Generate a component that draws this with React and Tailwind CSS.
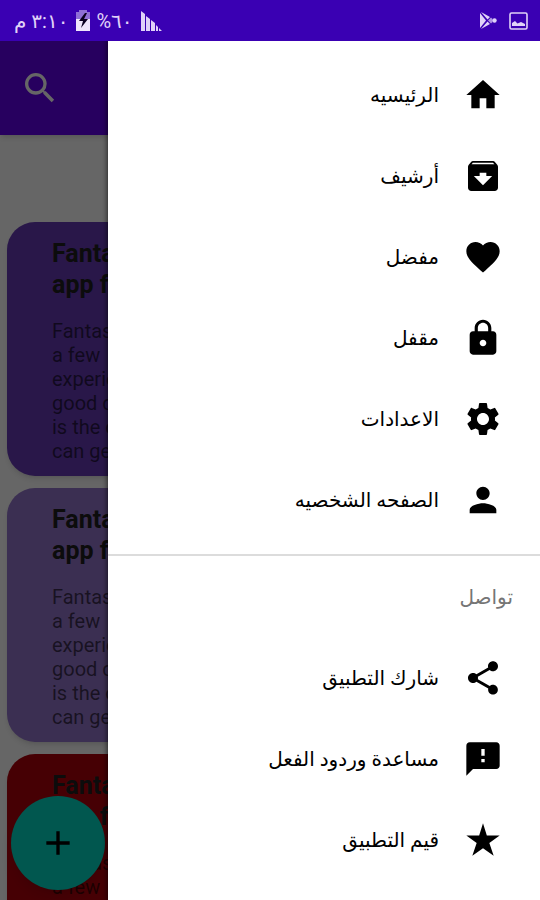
import {
  MdAdd,
  MdArchive,
  MdFavorite,
  MdFeedback,
  MdHome,
  MdLock,
  MdPerson,
  MdSearch,
  MdSettings,
  MdShare,
} from "react-icons/md";

function StarIcon({ className }) {
  return (
    <svg viewBox="0 0 24 24" fill="currentColor" className={className}>
      <path d="M12 2l2.300 7.300H22l-6.200 4.500 2.600 7.700L12 16.900l-6.400 4.600 2.600-7.700L2 9.300h7.700z" />
    </svg>
  );
}

const mainLinks = [
  { label: "الرئيسيه", icon: MdHome },
  { label: "أرشيف", icon: MdArchive },
  { label: "مفضل", icon: MdFavorite },
  { label: "مقفل", icon: MdLock },
  { label: "الاعدادات", icon: MdSettings },
  { label: "الصفحه الشخصيه", icon: MdPerson },
];

const contactLinks = [
  { label: "شارك التطبيق", icon: MdShare },
  { label: "مساعدة وردود الفعل", icon: MdFeedback },
  { label: "قيم التطبيق", icon: StarIcon },
];

const notes = [
  { id: 1, color: "bg-[#673ab7]" },
  { id: 2, color: "bg-[#9575cd]" },
  { id: 3, color: "bg-[#b0000c]" },
];

const noteTitle = ["Fantastic", "app for"];
const noteLines = ["Fantastic", "a few", "experience", "good design", "is the one", "can get"];

function StatusBar() {
  return (
    <header className="flex h-[41px] shrink-0 items-center justify-between bg-[#3a00b3] pl-[14px] pr-3 text-[20px] leading-6 text-[#e0d2f8]">
      <div className="flex items-center">
        <span dir="rtl">٣:١٠ م</span>
        <svg viewBox="0 0 14 21" className="ml-2 h-[21px] w-[14px]">
          <path d="M0 2h3V0h8v2h3v19H0z" fill="#8f6fd6" />
          <path d="M0 9h14v12H0z" fill="#efe6fb" />
          <path d="M9 3L3 11h4l-2 7 7-9H8l3-6z" fill="#0b0020" />
        </svg>
        <span className="ml-[6px]">%٦٠</span>
        <svg viewBox="0 0 22 20" className="ml-2 h-5 w-[22px]" fill="currentColor">
          <path d="M0 0l4 3v17H0zM5 5l4 3v12H5zM10 9l4 3v8h-4zM15 14l2 2v4h-2zM18 17l3 3h-3z" />
        </svg>
      </div>
      <div className="flex items-center gap-3">
        <svg viewBox="0 0 17 17" className="h-[17px] w-[17px]" fill="currentColor">
          <path d="M0 1v15l6-7.500z" />
          <path d="M1 0l6.500 7.500L10 5zM1 17l6.500-7.500L10 12z" />
          <path d="M11 5.500l-3 3 3 3 1.500-1.500V7z" fillOpacity="0.7" />
          <circle cx="14.500" cy="8.500" r="2.200" />
        </svg>
        <svg viewBox="0 0 19 18" className="h-[18px] w-[19px]">
          <rect x="1" y="1" width="17" height="16" rx="1.500" fill="none" stroke="currentColor" strokeWidth="1.600" />
          <path d="M3 14v-3l3-2 2.500 2.500L12 10l4 2v2z" fill="currentColor" />
        </svg>
      </div>
    </header>
  );
}

function NoteCard({ color }) {
  return (
    <article className={`${color} rounded-[28px] pt-4 pr-4 pb-[13px] pl-[45px] text-black shadow-md`}>
      <h2 className="text-[25px] leading-[31px] font-bold text-[#202020]">
        {noteTitle.map((line) => (
          <span key={line} className="block whitespace-nowrap">
            {line}
          </span>
        ))}
      </h2>
      <p className="mt-[19px] text-[20px] leading-6 text-black/60">
        {noteLines.map((line) => (
          <span key={line} className="block whitespace-nowrap">
            {line}
          </span>
        ))}
      </p>
    </article>
  );
}

function DrawerLink({ label, icon: Icon }) {
  return (
    <li>
      <a href="#" className="flex h-[81px] items-center gap-6 pr-[37px] text-[20px] leading-8 text-black">
        <Icon className="size-10 shrink-0" />
        <span>{label}</span>
      </a>
    </li>
  );
}

function Drawer() {
  return (
    <nav
      dir="rtl"
      className="absolute inset-y-0 right-0 w-4/5 overflow-hidden bg-white pt-[13px] shadow-[0_0_5px_1px_rgba(0,0,0,0.6)]"
    >
      <ul>
        {mainLinks.map((link) => (
          <DrawerLink key={link.label} {...link} />
        ))}
      </ul>
      <div className="mt-[14px] border-t-2 border-[#dcdcdc]">
        <h2 className="flex h-[81px] items-center pr-[27px] text-[20px] leading-8 text-[#757575]">تواصل</h2>
        <ul>
          {contactLinks.map((link) => (
            <DrawerLink key={link.label} {...link} />
          ))}
        </ul>
      </div>
    </nav>
  );
}

export default function App() {
  return (
    <div className="flex h-screen flex-col overflow-hidden bg-white font-['Roboto','DejaVu_Sans',sans-serif]">
      <StatusBar />
      <div className="relative min-h-0 flex-1 overflow-hidden">
        <div className="flex h-[94px] items-center bg-[#6200ee] pl-5 shadow-md">
          <button type="button" aria-label="Search" className="text-white">
            <MdSearch className="size-10" />
          </button>
        </div>
        <main className="mt-[87px] flex w-1/2 flex-col gap-3 pl-[7px]">
          {notes.map((note) => (
            <NoteCard key={note.id} color={note.color} />
          ))}
        </main>
        <button
          type="button"
          aria-label="Add note"
          className="absolute bottom-[10px] left-[11px] flex size-[94px] items-center justify-center rounded-full bg-[#03dac5] text-black shadow-lg"
        >
          <MdAdd className="size-10" />
        </button>
        <div className="absolute inset-0 bg-black/60" />
        <Drawer />
      </div>
    </div>
  );
}
